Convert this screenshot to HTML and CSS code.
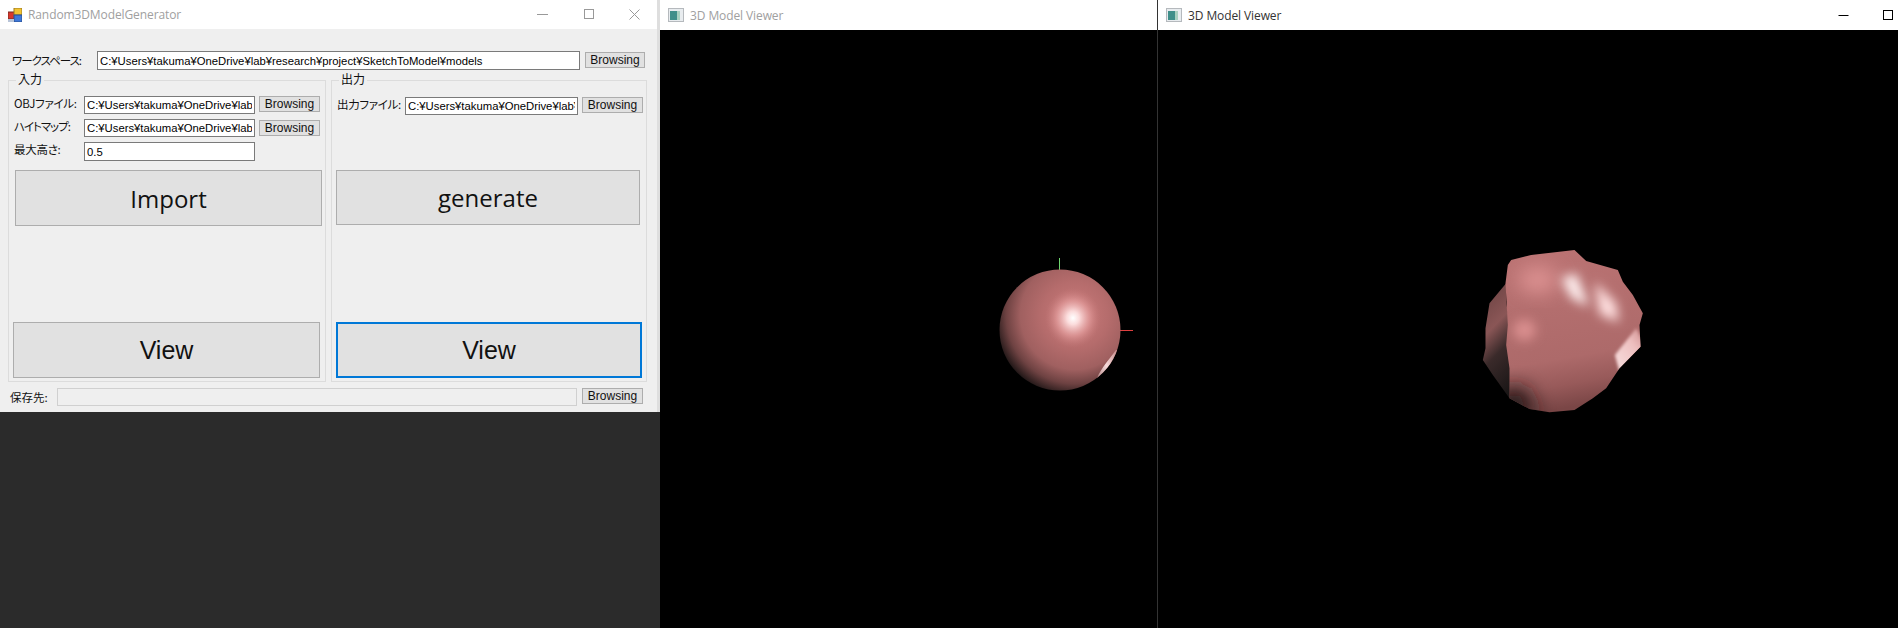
FILE: index.html
```html
<!DOCTYPE html>
<html lang="ja">
<head>
    <meta charset="UTF-8">
    <title>Random3DModelGenerator</title>
    <link rel="stylesheet" href="styles.css">
</head>
<body>
    <div class="desktop">
        <div class="left-side">
            <div class="app-window">
                <div class="titlebar">
                    <svg class="app-icon" width="14" height="14" viewBox="0 0 14 14">
                        <rect x="0" y="4" width="7" height="7" fill="#d9372c" stroke="#7a2a20"/>
                        <rect x="6" y="0" width="8" height="7" fill="#f2c230" stroke="#9a7a20"/>
                        <rect x="6" y="7" width="8" height="7" fill="#3f78d8" stroke="#2b4f90"/>
                        <rect x="0" y="11" width="6" height="3" fill="#b8c4d8"/>
                    </svg>
                    <span class="title-text inactive">Random3DModelGenerator</span>
                    <div class="win-controls app-controls">
                        <svg width="11" height="11" viewBox="0 0 11 11"><path d="M0 5.5H11" stroke="#999"/></svg>
                        <svg width="11" height="11" viewBox="0 0 11 11"><rect x="1.5" y="0.5" width="9" height="9" fill="none" stroke="#999"/></svg>
                        <svg width="11" height="11" viewBox="0 0 11 11"><path d="M0.5 0.5L10.5 10.5M10.5 0.5L0.5 10.5" stroke="#999"/></svg>
                    </div>
                </div>
                <div class="form">
                    <div class="workspace-row">
                        <label class="workspace-label tight">ワークスペース:</label>
                        <input class="field workspace-field" type="text" value="C:¥Users¥takuma¥OneDrive¥lab¥research¥project¥SketchToModel¥models">
                        <button class="browse">Browsing</button>
                    </div>
                    <div class="groups">
                        <div class="group group-in">
                            <div class="group-title">入力</div>
                            <div class="row first">
                                <label class="row-label">OBJファイル:</label>
                                <input class="field path-field" type="text" value="C:¥Users¥takuma¥OneDrive¥lab¥">
                                <button class="browse">Browsing</button>
                            </div>
                            <div class="row second">
                                <label class="row-label tight">ハイトマップ:</label>
                                <input class="field path-field" type="text" value="C:¥Users¥takuma¥OneDrive¥lab¥">
                                <button class="browse">Browsing</button>
                            </div>
                            <div class="row">
                                <label class="row-label">最大高さ:</label>
                                <input class="field path-field tall" type="text" value="0.5">
                            </div>
                            <button class="big-btn import-btn">Import</button>
                            <button class="big-btn view-btn view-left">View</button>
                        </div>
                        <div class="group group-out">
                            <div class="group-title">出力</div>
                            <div class="row first">
                                <label class="row-label">出力ファイル:</label>
                                <input class="field out-field" type="text" value="C:¥Users¥takuma¥OneDrive¥lab¥">
                                <button class="browse">Browsing</button>
                            </div>
                            <button class="big-btn generate-btn">generate</button>
                            <button class="big-btn view-btn view-right">View</button>
                        </div>
                    </div>
                    <div class="save-row">
                        <label class="save-label">保存先:</label>
                        <input class="field save-field" type="text" disabled>
                        <button class="browse">Browsing</button>
                    </div>
                </div>
            </div>
        </div>

        <div class="viewer viewer-one">
            <div class="titlebar">
                <svg class="viewer-icon" width="16" height="14" viewBox="0 0 16 14">
                    <rect x="0.5" y="0.5" width="15" height="13" fill="#e8ecef" stroke="#b5b9bd"/>
                    <rect x="2" y="3" width="7" height="9" fill="#3f8f8a"/>
                    <rect x="9" y="3" width="3" height="9" fill="#a8d0c0"/>
                </svg>
                <span class="title-text inactive">3D Model Viewer</span>
            </div>
            <svg class="canvas" viewBox="0 0 497 598">
                <defs>
                    <radialGradient id="ball" gradientUnits="userSpaceOnUse" cx="415" cy="285" r="84">
                        <stop offset="0" stop-color="#cc7c7c"/>
                        <stop offset="0.4" stop-color="#b56c6c"/>
                        <stop offset="0.65" stop-color="#a06060"/>
                        <stop offset="0.82" stop-color="#6e4242"/>
                        <stop offset="1" stop-color="#141010"/>
                    </radialGradient>
                    <radialGradient id="shine">
                        <stop offset="0" stop-color="#fff"/>
                        <stop offset="0.22" stop-color="#fbdcdc"/>
                        <stop offset="0.6" stop-color="#e6a0a0" stop-opacity="0.65"/>
                        <stop offset="1" stop-color="#c67a7a" stop-opacity="0"/>
                    </radialGradient>
                    <linearGradient id="rim" x1="0" y1="1" x2="1" y2="0">
                        <stop offset="0" stop-color="#8a5050"/>
                        <stop offset="0.5" stop-color="#f6dcdc"/>
                        <stop offset="1" stop-color="#b87070"/>
                    </linearGradient>
                    <clipPath id="ball-clip"><circle cx="400" cy="300" r="60.5"/></clipPath>
                </defs>
                <path d="M399.5 228V240" stroke="#6fd66f"/>
                <path d="M460 300.5H473" stroke="#e04040"/>
                <circle cx="400" cy="300" r="60.5" fill="url(#ball)"/>
                <ellipse cx="413" cy="288" rx="28" ry="30" fill="url(#shine)"/>
                <path d="M436 352C438 342 447 332 456 320L464 320L464 362L436 362Z" fill="url(#rim)" clip-path="url(#ball-clip)"/>
            </svg>
        </div>

        <div class="viewer viewer-two">
            <div class="titlebar">
                <svg class="viewer-icon" width="16" height="14" viewBox="0 0 16 14">
                    <rect x="0.5" y="0.5" width="15" height="13" fill="#e8ecef" stroke="#b5b9bd"/>
                    <rect x="2" y="3" width="7" height="9" fill="#3f8f8a"/>
                    <rect x="9" y="3" width="3" height="9" fill="#a8d0c0"/>
                </svg>
                <span class="title-text">3D Model Viewer</span>
                <div class="win-controls viewer-controls">
                    <svg width="11" height="11" viewBox="0 0 11 11"><path d="M0.5 5.5H10.5" stroke="#000"/></svg>
                    <svg width="11" height="11" viewBox="0 0 11 11"><rect x="0.5" y="0.5" width="9" height="9" fill="none" stroke="#000"/></svg>
                </div>
            </div>
            <!-- blob coordinates are 3x, taken from a crop at (1460,235) -->
            <svg class="canvas" viewBox="-903 -615 2217 1794">
                <defs>
                    <linearGradient id="blob-body" x1="0.1" y1="0" x2="0.25" y2="1">
                        <stop offset="0" stop-color="#bb7373"/>
                        <stop offset="0.7" stop-color="#ad6a6a"/>
                        <stop offset="0.86" stop-color="#985a5a"/>
                        <stop offset="1" stop-color="#7a4646"/>
                    </linearGradient>
                    <linearGradient id="blob-back" x1="0.3" y1="0" x2="0.6" y2="1">
                        <stop offset="0" stop-color="#6e4444"/>
                        <stop offset="0.35" stop-color="#8a5656"/>
                        <stop offset="0.6" stop-color="#3a2a2a"/>
                        <stop offset="1" stop-color="#1a1616"/>
                    </linearGradient>
                    <linearGradient id="blob-rim" x1="0" y1="1" x2="1" y2="0">
                        <stop offset="0" stop-color="#f8e0e0"/>
                        <stop offset="0.6" stop-color="#eec0c0"/>
                        <stop offset="1" stop-color="#c88484"/>
                    </linearGradient>
                    <filter id="soft" x="-60%" y="-60%" width="220%" height="220%"><feGaussianBlur stdDeviation="16"/></filter>
                    <filter id="softer" x="-60%" y="-60%" width="220%" height="220%"><feGaussianBlur stdDeviation="30"/></filter>
                    <filter id="slight" x="-30%" y="-30%" width="160%" height="160%"><feGaussianBlur stdDeviation="5"/></filter>
                    <clipPath id="blob-clip">
                        <path d="M155 75L215 60L345 45L380 78L475 105L490 140L520 180L550 235L540 270L543 335L480 400L440 460L400 490L345 525L270 532L210 522L150 490V400L140 330L145 270L138 145L145 90Z"/>
                    </clipPath>
                </defs>
                <path d="M140 145L90 205L78 280L78 340L70 375L100 420L150 490L170 400L140 200Z" fill="url(#blob-back)"/>
                <path d="M155 75L215 60L345 45L380 78L475 105L490 140L520 180L550 235L540 270L543 335L480 400L440 460L400 490L345 525L270 532L210 522L150 490V400L140 330L145 270L138 145L145 90Z" fill="url(#blob-body)"/>
                <g clip-path="url(#blob-clip)">
                    <ellipse cx="235" cy="135" rx="60" ry="38" fill="#e09494" filter="url(#softer)"/>
                    <ellipse cx="195" cy="285" rx="34" ry="32" fill="#d98e8e" filter="url(#soft)"/>
                    <path d="M305 130L350 115L390 215L335 190Z" fill="#fff0f0" filter="url(#soft)"/>
                    <path d="M405 140L470 205L478 262L420 238Z" fill="#ffe0e0" filter="url(#soft)"/>
                    <path d="M110 470L190 450L240 540L110 550Z" fill="#241616" filter="url(#softer)"/>
                    <path d="M530 280L560 335L480 410L466 360Z" fill="url(#blob-rim)" filter="url(#slight)"/>
                </g>
            </svg>
        </div>
    </div>
</body>
</html>
```

FILE: styles.css
```css
html, body {
    margin: 0;
    padding: 0;
    height: 100%;
    overflow: hidden;
}
body {
    font-family: "Liberation Sans", "Noto Sans CJK JP", sans-serif;
    font-size: 12px;
    color: #111;
    background-color: #2b2b2b;
}
label {
    font-family: "Noto Sans CJK JP", sans-serif;
    font-feature-settings: "palt";
    white-space: nowrap;
    letter-spacing: -0.3px;
}
label.tight {
    letter-spacing: -1px;
}
.desktop {
    display: flex;
    width: 1898px;
    height: 628px;
}
.left-side {
    width: 660px;
    flex-shrink: 0;
    background-color: #2b2b2b;
}
.app-window {
    box-sizing: border-box;
    width: 660px;
    height: 412px;
    background-color: #efefef;
    border-right: 3px solid #dedede;
    display: flex;
    flex-direction: column;
}
.titlebar {
    display: flex;
    align-items: center;
    height: 29px;
    flex-shrink: 0;
    background-color: #fff;
    font-family: "Open Sans", "Noto Sans", sans-serif;
}
.app-icon {
    margin: 0 6px 0 8px;
}
.viewer-icon {
    margin: 0 6px 0 8px;
}
.title-text {
    font-size: 12px;
    color: #333;
    letter-spacing: -0.1px;
}
.title-text.inactive {
    color: #a0a0a0;
}
.win-controls {
    margin-left: auto;
    display: flex;
}
.app-controls {
    gap: 35px;
    margin-right: 17px;
}
.viewer-controls {
    gap: 34px;
    margin-right: 4px;
}
.form {
    flex: 1;
    display: flex;
    flex-direction: column;
}
.field {
    box-sizing: border-box;
    height: 18px;
    margin: 0;
    padding: 0 2px;
    border: 1px solid #7a7a7a;
    background-color: #fff;
    font-family: "Liberation Sans", sans-serif;
    font-size: 11.3px;
    color: #000;
    outline: none;
}
.browse {
    box-sizing: border-box;
    width: 61px;
    height: 16px;
    margin: 0;
    padding: 1px 0 0;
    border: 1px solid #adadad;
    background-color: #e1e1e1;
    font-family: "Liberation Sans", sans-serif;
    font-size: 12px;
    line-height: 13px;
    color: #111;
}
.workspace-row {
    display: flex;
    align-items: flex-start;
    margin-top: 22px;
    height: 19px;
}
.workspace-label {
    width: 85px;
    margin-left: 12px;
    font-size: 11.5px;
    line-height: 18px;
}
.workspace-field {
    width: 483px;
    height: 19px;
}
.workspace-row .browse {
    margin: 1px 0 0 5px;
    width: 60px;
}
.groups {
    display: flex;
    margin: 10px 0 0 8px;
    height: 302px;
}
.group {
    box-sizing: border-box;
    display: flex;
    flex-direction: column;
    border: 1px solid #dcdcdc;
    height: 100%;
    padding-bottom: 3px;
}
.group-in {
    width: 318px;
    margin-right: 5px;
}
.group-out {
    width: 316px;
}
.group-title {
    width: fit-content;
    height: 14px;
    margin: -9px 0 1px 7px;
    padding: 0 2px;
    background-color: #efefef;
    font-family: "Noto Sans CJK JP", sans-serif;
    font-size: 12px;
    line-height: 14px;
}
.row {
    display: flex;
    align-items: flex-start;
    margin-top: 5px;
    padding-left: 5px;
}
.row.first {
    margin-top: 9px;
}
.row.second .browse {
    margin-top: 1px;
}
.row-label {
    width: 70px;
    font-size: 11.5px;
    line-height: 15px;
}
.path-field {
    width: 171px;
    margin-right: 4px;
}
.path-field.tall {
    height: 19px;
}
.group-out .row.first {
    margin-top: 10px;
}
.group-out .row-label {
    width: 68px;
}
.out-field {
    width: 173px;
    margin-right: 4px;
}
.big-btn {
    box-sizing: border-box;
    height: 56px;
    margin: 0;
    padding: 0;
    border: 1px solid #adadad;
    background-color: #e1e1e1;
    font-family: "Open Sans", "Noto Sans", sans-serif;
    font-size: 24px;
    color: #111;
}
.import-btn {
    width: 307px;
    margin: 9px 0 0 6px;
}
.generate-btn {
    width: 304px;
    height: 55px;
    margin: 55px 0 0 4px;
}
.view-btn {
    margin-top: auto;
    font-family: "Liberation Sans", sans-serif;
    font-size: 25px;
}
.view-left {
    width: 307px;
    margin-left: 4px;
}
.view-right {
    width: 306px;
    margin-left: 4px;
    border: 2px solid #0078d7;
}
.save-row {
    display: flex;
    align-items: flex-start;
    margin-top: 6px;
    padding-left: 10px;
}
.save-label {
    width: 47px;
    font-size: 11.5px;
    line-height: 18px;
    letter-spacing: 0;
}
.save-field {
    width: 520px;
    border-color: #d0d0d0;
    background-color: #efefef;
}
.save-row .browse {
    margin-left: 5px;
}
.viewer {
    display: flex;
    flex-direction: column;
    height: 100%;
    background-color: #000;
}
.viewer .titlebar {
    height: 30px;
}
.viewer-one {
    width: 497px;
    flex-shrink: 0;
}
.viewer-two {
    flex: 1;
    border-left: 1px solid #333;
}
.canvas {
    flex: 1;
    display: block;
    width: 100%;
    min-height: 0;
}
```
